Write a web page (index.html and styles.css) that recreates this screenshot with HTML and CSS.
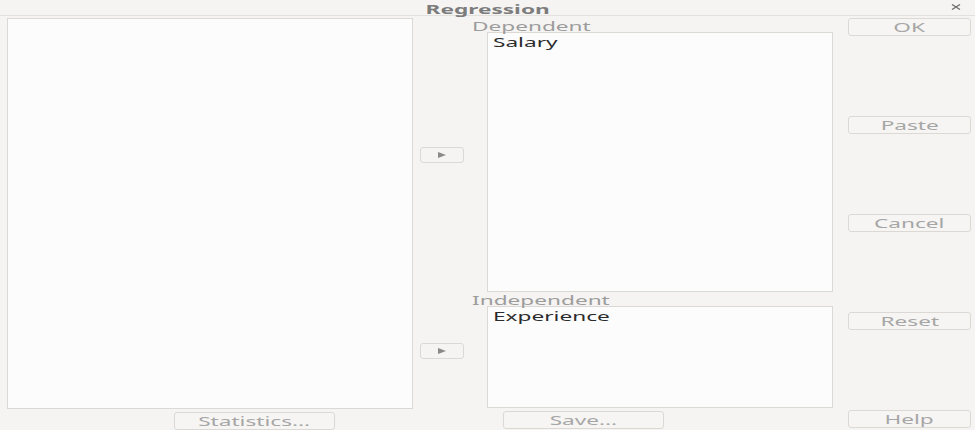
FILE: index.html
```html
<!DOCTYPE html>
<html lang="en">
<head>
    <meta charset="UTF-8">
    <title>Regression</title>
    <link rel="stylesheet" href="styles.css">
</head>
<body>
    <div class="titlebar">
        <span class="title">Regression</span>
        <svg class="close" width="10" height="6" viewBox="0 0 10 6">
            <path d="M1 0.5 L9 5.5 M9 0.5 L1 5.5" stroke="#6f6f6f" stroke-width="1.3" fill="none"/>
        </svg>
    </div>
    <div class="main">
        <div class="source-col">
            <div class="listbox source"></div>
            <button class="btn stats"><span class="wide-c">Statistics...</span></button>
        </div>
        <div class="arrow-col">
            <button class="arrow"><svg width="8" height="6" viewBox="0 0 8 6"><path d="M0 0 L8 3 L0 6 Z" fill="#8a8a8a"/></svg></button>
            <button class="arrow second"><svg width="8" height="6" viewBox="0 0 8 6"><path d="M0 0 L8 3 L0 6 Z" fill="#8a8a8a"/></svg></button>
        </div>
        <div class="target-col">
            <div class="label"><span class="wide">Dependent</span></div>
            <div class="listbox dependent">
                <div class="item"><span class="wide">Salary</span></div>
            </div>
            <div class="label"><span class="wide">Independent</span></div>
            <div class="listbox independent">
                <div class="item"><span class="wide">Experience</span></div>
            </div>
            <button class="btn save"><span class="wide-c">Save...</span></button>
        </div>
        <div class="button-col">
            <button class="btn side"><span class="wide-c">OK</span></button>
            <button class="btn side"><span class="wide-c">Paste</span></button>
            <button class="btn side"><span class="wide-c">Cancel</span></button>
            <button class="btn side"><span class="wide-c">Reset</span></button>
            <button class="btn side"><span class="wide-c">Help</span></button>
        </div>
    </div>
</body>
</html>
```

FILE: styles.css
```css
body {
    margin: 0;
    background: #f5f4f2;
    font-family: "Noto Sans", sans-serif;
    font-size: 13px;
    overflow: hidden;
}
.wide {
    display: inline-block;
    transform: scaleX(1.74);
    transform-origin: left center;
}
.wide-c {
    display: inline-block;
    transform: scaleX(1.74);
    transform-origin: center center;
}
.titlebar {
    position: relative;
    height: 15px;
    border-bottom: 1px solid #e3e1de;
    text-align: center;
}
.title {
    display: inline-block;
    font-weight: bold;
    line-height: 16px;
    color: #7c7c7c;
    transform: scaleX(1.74);
    transform-origin: center center;
}
.close {
    position: absolute;
    right: 14px;
    top: 4px;
}
.main {
    display: flex;
    padding: 2px 0 0 7px;
}
.listbox {
    background: #fcfcfc;
    border: 1px solid #dcd9d5;
    box-sizing: border-box;
}
.source-col {
    width: 406px;
    display: flex;
    flex-direction: column;
}
.source {
    height: 391px;
}
.btn {
    height: 18px;
    padding: 0;
    border: 1px solid #dcd9d5;
    border-radius: 3px;
    background: #f6f5f3;
    color: #a6a6a6;
    font-family: "Noto Sans", sans-serif;
    font-size: 13px;
    line-height: 16px;
}
.stats {
    width: 161px;
    margin: 3px 0 0 167px;
}
.arrow-col {
    width: 59px;
    display: flex;
    flex-direction: column;
    padding-top: 129px;
}
.arrow {
    width: 44px;
    height: 16px;
    margin-left: 7px;
    padding: 0;
    border: 1px solid #dcd9d5;
    border-radius: 3px;
    background: #f5f4f2;
    display: flex;
    align-items: center;
    justify-content: center;
}
.arrow.second {
    margin-top: 180px;
}
.target-col {
    width: 361px;
    display: flex;
    flex-direction: column;
}
.label {
    height: 14px;
    line-height: 17px;
    color: #9c9c9c;
}
.dependent {
    height: 260px;
    margin-left: 15px;
    width: 346px;
}
.independent {
    height: 102px;
    margin-left: 15px;
    width: 346px;
}
.item {
    color: #2b2b2b;
    padding: 1px 0 0 5px;
    line-height: 16px;
}
.save {
    width: 161px;
    margin: 3px 0 0 31px;
}
.button-col {
    width: 123px;
    height: 410px;
    margin-left: 15px;
    display: flex;
    flex-direction: column;
    justify-content: space-between;
}
.side {
    width: 123px;
}
```
